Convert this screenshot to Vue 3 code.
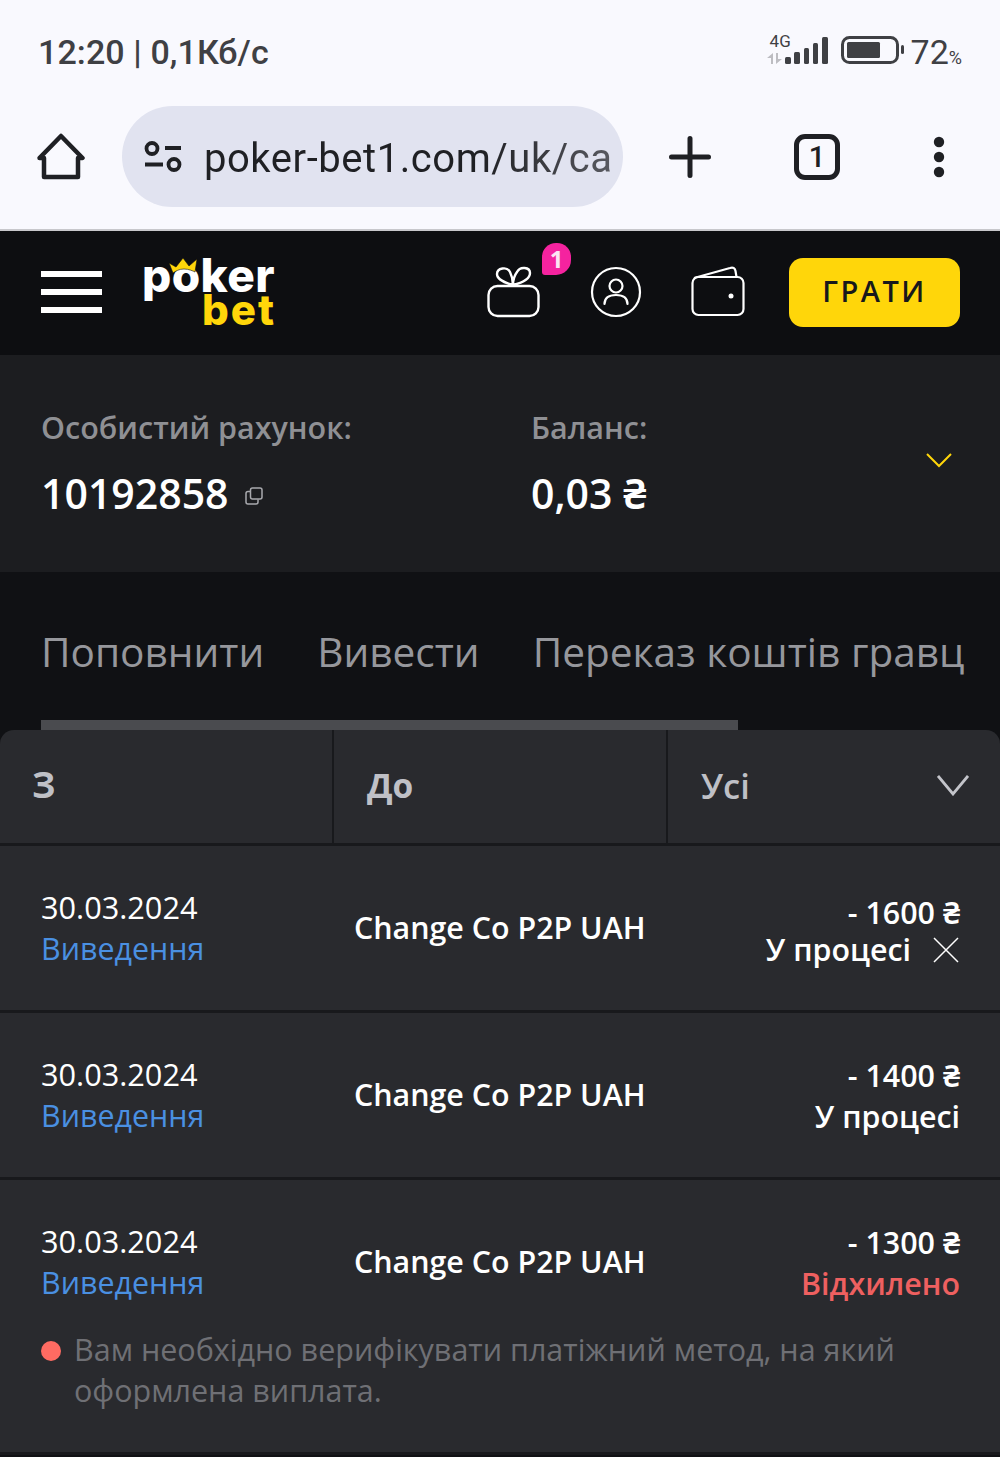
<script setup>
const rows = [
  { amount: '- 1600 ₴', status: 'У процесі', cancel: true },
  { amount: '- 1400 ₴', status: 'У процесі' },
  { amount: '- 1300 ₴', status: 'Відхилено', rejected: true, note: 'Вам необхідно верифікувати платіжний метод, на який оформлена виплата.' },
]
</script>

<template>
  <div class="page">
    <div class="chrome">
      <div class="status">
        <span class="clock">12:20 | 0,1Кб/с</span>
        <div class="status-right">
          <div class="signal">
            <span class="net">4G</span>
            <svg width="62" height="28" viewBox="0 0 62 28">
              <path d="M6 17v11H4v-6H0zM9 28V17h2v6h4z" fill="#bdbdc2"/>
              <g fill="#3f4044">
                <rect x="18" y="21" width="6" height="7" rx="1.500"/>
                <rect x="27" y="16" width="6" height="12" rx="1.500"/>
                <rect x="37" y="12" width="5" height="16" rx="1.500"/>
                <rect x="46" y="7" width="5" height="21" rx="1.500"/>
                <rect x="55" y="1" width="6" height="27" rx="1.500"/>
              </g>
            </svg>
          </div>
          <svg class="battery" width="63" height="28" viewBox="0 0 63 28">
            <rect x="1.500" y="1.500" width="55" height="25" rx="7" fill="none" stroke="#3f4044" stroke-width="3"/>
            <rect x="6" y="6" width="33" height="16" rx="1.500" fill="#3f4044"/>
            <rect x="60" y="9" width="3" height="9" rx="1.500" fill="#3f4044"/>
          </svg>
          <span class="pct">72<small>%</small></span>
        </div>
      </div>
      <div class="toolbar">
        <svg class="home" width="48" height="48" viewBox="0 0 48 48" fill="none" stroke="#1f2024" stroke-width="4.500" stroke-linejoin="round" stroke-linecap="round">
          <path d="M2.500 25 24 3l21.500 22H41v19H7V25z"/>
        </svg>
        <div class="url">
          <svg width="40" height="34" viewBox="0 0 40 34" fill="none" stroke="#1f2024" stroke-width="3.800">
            <circle cx="9" cy="8.500" r="5.500"/>
            <path d="M22 8h16M2 24.500h18"/>
            <circle cx="31" cy="24.500" r="5.500"/>
          </svg>
          <span class="url-text">poker-bet1.com/uk/ca</span>
        </div>
        <svg class="plus" width="42" height="42" viewBox="0 0 42 42" stroke="#1f2024" stroke-width="5" stroke-linecap="round">
          <path d="M21 2.500v37M2.500 21h37"/>
        </svg>
        <div class="tab-count">1</div>
        <svg class="dots" width="14" height="42" viewBox="0 0 14 42" fill="#1f2024">
          <circle cx="7" cy="6" r="5.200"/>
          <circle cx="7" cy="21" r="5.200"/>
          <circle cx="7" cy="36" r="5.200"/>
        </svg>
      </div>
    </div>

    <header class="topbar">
      <div class="burger"><i></i><i></i><i></i></div>
      <div class="logo">
        <div class="logo-poker">poker</div>
        <div class="logo-bet">bet</div>
        <svg class="crown" width="30" height="18" viewBox="0 0 30 18">
          <path d="M0 5l7 4 7-9 6 8 8-7-2 13c-2-1-6-3-11-3-5 0-8 2-11 4z" fill="#ffd60a" stroke="#0d0e11" stroke-width=".6"/>
        </svg>
      </div>
      <div class="top-icons">
        <div class="gift">
          <svg width="54" height="54" viewBox="0 0 54 54" fill="none" stroke="#fff" stroke-width="2.400">
            <rect x="1.500" y="21" width="50" height="30" rx="9"/>
            <path d="M26 20C18 18 10 14 10 9 10 3 20 1 23 7c2 4 3 8 3 13zM26 20c8-2 17-6 17-12 0-6-10-7-13-1-3 4-4 8-4 13z"/>
          </svg>
          <span class="badge">1</span>
        </div>
        <svg width="52" height="52" viewBox="0 0 52 52" fill="none" stroke="#fff" stroke-width="2.200" stroke-linecap="round">
          <circle cx="26" cy="26" r="24"/>
          <circle cx="26" cy="20" r="6.500"/>
          <path d="M14.500 38c0-6 4-9 11.500-9s11.500 3 11.500 9"/>
        </svg>
        <svg width="56" height="52" viewBox="0 0 56 52" fill="none" stroke="#fff" stroke-width="2.200" stroke-linejoin="round">
          <rect x="1.500" y="11" width="51" height="38" rx="6"/>
          <path d="M3 12 39 2c3-1 5 0 5.500 3l1 6"/>
          <circle cx="40" cy="30" r="2.500" fill="#fff" stroke="none"/>
        </svg>
      </div>
      <button class="play">ГРАТИ</button>
    </header>

    <section class="account">
      <div class="acc-col acc-id">
        <div class="acc-label">Особистий рахунок:</div>
        <div class="acc-value">
          <span>10192858</span>
          <svg width="18" height="18" viewBox="0 0 18 18" fill="none" stroke="#a8a9ad" stroke-width="1.500">
            <rect x="5.500" y="1" width="11.500" height="11" rx="2"/>
            <path d="M5 4.500H3a2 2 0 0 0-2 2V15a2 2 0 0 0 2 2h8a2 2 0 0 0 2-2v-2.500"/>
          </svg>
        </div>
      </div>
      <div class="acc-col">
        <div class="acc-label">Баланс:</div>
        <div class="acc-value">0,03 ₴</div>
      </div>
      <svg class="acc-chevron" width="26" height="16" viewBox="0 0 26 16" fill="none" stroke="#ffd60a" stroke-width="2">
        <path d="M1 2l12 12L25 2"/>
      </svg>
    </section>

    <nav class="tabs">
      <div class="tab-row">
        <span>Поповнити</span>
        <span>Вивести</span>
        <span>Переказ коштів гравц</span>
      </div>
      <div class="scroll-thumb"></div>
    </nav>

    <section class="card">
      <div class="filters">
        <div class="filter bold">З</div>
        <div class="filter bold">До</div>
        <div class="filter select">
          <span>Усі</span>
          <svg width="32" height="22" viewBox="0 0 32 22" fill="none" stroke="#c3c4ca" stroke-width="2.800">
            <path d="M1 2l15 18L31 2"/>
          </svg>
        </div>
      </div>
      <div v-for="(row, i) in rows" :key="i" class="row" :class="{ tall: row.note }">
        <div class="row-main">
          <div class="row-date">
            <div class="date">30.03.2024</div>
            <div class="kind">Виведення</div>
          </div>
          <div class="method">Change Co P2P UAH</div>
          <div class="row-amount" :class="{ 'with-cancel': row.cancel }">
            <div class="amount">{{ row.amount }}</div>
            <div class="state" :class="{ rejected: row.rejected }">
              <span>{{ row.status }}</span>
              <svg v-if="row.cancel" class="cancel" width="28" height="28" viewBox="0 0 28 28" stroke="#fff" stroke-width="1.500">
                <path d="M2 2l24 24M26 2 2 26"/>
              </svg>
            </div>
          </div>
        </div>
        <div v-if="row.note" class="note">
          <i class="dot"></i>
          <p>{{ row.note }}</p>
        </div>
      </div>
    </section>
  </div>
</template>

<style>
html, body { margin: 0; background: #101114; }
</style>

<style scoped>
.page {
  width: 1000px;
  height: 1457px;
  overflow: hidden;
  background: #101114;
  font-family: "Open Sans", "Noto Sans", sans-serif;
}
.chrome {
  height: 231px;
  box-sizing: border-box;
  background: #f9f9fe;
  border-bottom: 2px solid #c8c8cc;
  font-family: Roboto, sans-serif;
}
.status {
  height: 106px;
  box-sizing: border-box;
  padding: 31px 38px 0;
  display: flex;
  justify-content: space-between;
  align-items: flex-start;
  color: #3f4044;
}
.clock { font-size: 34px; line-height: 42px; letter-spacing: 0.1px; font-weight: 500; }
.status-right { display: flex; align-items: flex-start; margin-top: 5px; }
.signal { position: relative; width: 62px; height: 28px; }
.signal svg { display: block; }
.net { position: absolute; left: 3px; top: -4px; font-size: 17px; line-height: 18px; }
.battery { margin-left: 12px; }
.pct { font-size: 34px; line-height: 38px; margin-left: 7px; margin-top: -3px; white-space: nowrap; }
.pct small { font-size: 18px; }
.toolbar {
  display: flex;
  align-items: center;
  height: 101px;
  padding-left: 37px;
}
.home { flex: none; }
.url {
  flex: none;
  margin-left: 37px;
  width: 501px;
  height: 101px;
  box-sizing: border-box;
  padding: 0 15px 0 21px;
  border-radius: 51px;
  background: #e1e3f0;
  display: flex;
  align-items: center;
  gap: 21px;
  overflow: hidden;
}
.url svg { flex: none; }
.url-text {
  white-space: nowrap;
  font-size: 40px;
  letter-spacing: 0.55px;
  color: #1f2024;
  margin-top: 3px;
  -webkit-mask-image: linear-gradient(to right, #000 68%, rgba(0, 0, 0, 0.7) 100%);
  mask-image: linear-gradient(to right, #000 68%, rgba(0, 0, 0, 0.7) 100%);
}
.plus { margin-left: 46px; flex: none; }
.tab-count {
  flex: none;
  margin-left: 83px;
  width: 46px;
  height: 46px;
  box-sizing: border-box;
  border: 5px solid #1f2024;
  border-radius: 11px;
  display: flex;
  align-items: center;
  justify-content: center;
  font-size: 29px;
  font-weight: 500;
  color: #1f2024;
}
.dots { margin-left: 92px; flex: none; }

.topbar {
  height: 124px;
  background: #0d0e11;
  display: flex;
  align-items: center;
  padding: 0 40px 0 41px;
  box-sizing: border-box;
}
.burger { width: 61px; display: flex; flex-direction: column; gap: 12px; margin-top: -2px; }
.burger i { display: block; height: 6px; background: #fff; }
.logo {
  position: relative;
  margin-left: 40px;
  width: 136px;
  height: 72px;
  font-family: Inter, sans-serif;
  font-weight: 800;
  line-height: 40px;
  margin-top: -4px;
  white-space: nowrap;
}
.logo-poker { color: #fff; font-size: 46px; letter-spacing: 0.4px; height: 35px; }
.logo-bet { color: #ffd60a; font-size: 42px; letter-spacing: 2px; margin-left: 60px; height: 37px; }
.crown { position: absolute; left: 27px; top: 3px; }
.top-icons {
  display: flex;
  align-items: center;
  margin-left: 209px;
  margin-top: -3px;
  gap: 49px;
}
.top-icons > svg { display: block; }
.gift { position: relative; width: 54px; height: 54px; }
.gift svg { display: block; }
.badge {
  position: absolute;
  left: 55px;
  top: -22px;
  width: 29px;
  height: 32px;
  border-radius: 14px 14px 15px 3px;
  background: #f5239f;
  color: #fbe5f3;
  font-weight: 700;
  font-size: 24px;
  line-height: 32px;
  text-align: center;
}
.play {
  margin-left: auto;
  margin-top: -2px;
  width: 171px;
  height: 69px;
  border: 0;
  border-radius: 14px;
  background: #ffd60a;
  color: #17181b;
  font-family: "Open Sans", sans-serif;
  font-size: 29px;
  font-weight: 600;
  letter-spacing: 2.500px;
  padding: 0 0 4px;
}

.account {
  position: relative;
  height: 217px;
  box-sizing: border-box;
  background: #1c1d20;
  padding: 52px 41px 0;
  display: flex;
}
.acc-id { width: 490px; }
.acc-label { font-size: 30.500px; font-weight: 600; line-height: 40px; color: #8f9094; white-space: nowrap; }
.acc-value {
  margin-top: 23px;
  font-size: 41px;
  font-weight: 600;
  line-height: 46px;
  color: #fff;
  display: flex;
  align-items: center;
  gap: 16px;
  white-space: nowrap;
}
.acc-value svg { margin-top: 6px; }
.acc-chevron { position: absolute; right: 48px; top: 97px; }

.tabs {
  height: 158px;
  box-sizing: border-box;
  background: #101114;
  padding: 55px 0 0 41px;
  overflow: hidden;
}
.tab-row {
  display: flex;
  gap: 53px;
  font-size: 40.600px;
  line-height: 50px;
  color: #96979c;
  white-space: nowrap;
}
.scroll-thumb { margin-top: 43px; width: 697px; height: 10px; background: #4a4b4f; }

.card {
  background: #292a2e;
  border-radius: 14px 14px 0 0;
  overflow: hidden;
}
.filters {
  display: grid;
  grid-template-columns: 334px 334px 1fr;
  height: 116px;
  border-bottom: 3px solid #18191c;
  box-sizing: border-box;
}
.filter {
  display: flex;
  align-items: center;
  box-sizing: border-box;
  padding-left: 33px;
  font-size: 33.500px;
  color: #bfc0c6;
  border-right: 2px solid #18191c;
  height: 113px;
}
.bold { font-weight: 700; padding-bottom: 4px; }
.filter.bold:first-child { font-size: 36px; padding-left: 32px; }
.select { border-right: 0; justify-content: space-between; padding-right: 31px; font-weight: 600; padding-bottom: 2px; font-size: 34.500px; }
.select svg { margin-top: -2px; }
.row {
  height: 167px;
  box-sizing: border-box;
  border-bottom: 3px solid #18191c;
  padding: 0 40px 0 41px;
}
.row.tall { height: 275px; }
.row-main {
  display: grid;
  grid-template-columns: 313px 1fr auto;
  align-items: center;
  height: 164px;
}
.row-date { margin-top: -1px; }
.date { font-size: 30.700px; line-height: 42px; color: #fff; }
.kind { font-size: 30.400px; line-height: 42px; color: #4a90e2; }
.method { font-size: 30.400px; font-weight: 600; color: #fff; line-height: 42px; }
.row-amount { align-self: start; text-align: right; padding-top: 42px; }
.row-amount.with-cancel { padding-top: 46px; }
.amount { font-size: 30.400px; font-weight: 600; color: #fff; line-height: 41px; }
.state {
  font-size: 30.400px;
  font-weight: 600;
  color: #fff;
  line-height: 41px;
  display: flex;
  align-items: center;
  justify-content: flex-end;
  gap: 21px;
}
.with-cancel .state { margin-top: -4px; }
.state.rejected { color: #ee6060; }
.cancel { flex: none; }
.note {
  display: flex;
  align-items: flex-start;
  margin-top: -15px;
}
.dot {
  flex: none;
  width: 20px;
  height: 20px;
  border-radius: 50%;
  background: #ff6b62;
  margin-top: 12px;
  margin-right: 13px;
}
.note p {
  margin: 0;
  width: 850px;
  font-size: 30.500px;
  line-height: 41px;
  color: #6f7075;
}
</style>
